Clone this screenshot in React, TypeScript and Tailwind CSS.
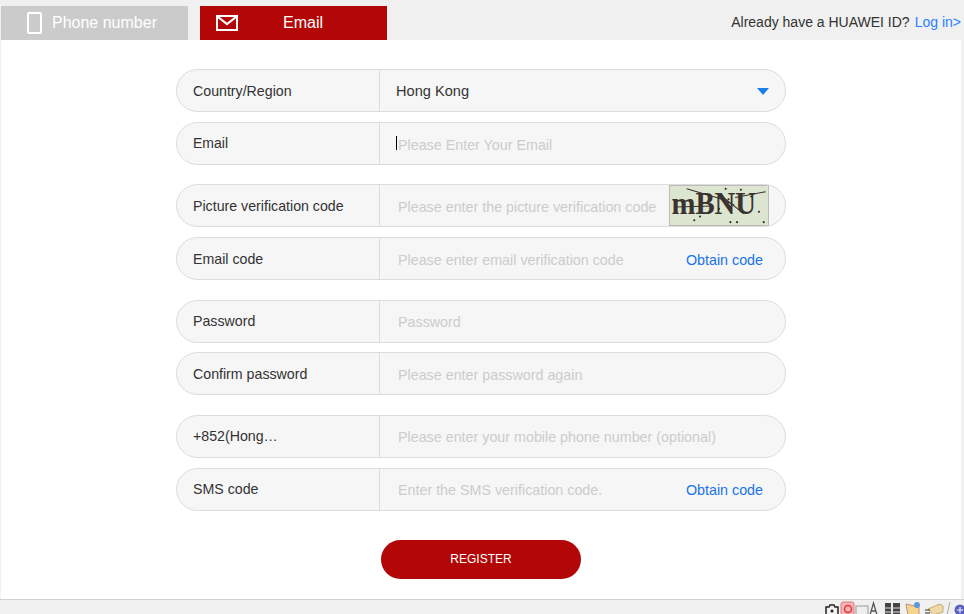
import { useState } from "react";

const FONT = "font-['Liberation_Sans',Arial,sans-serif]";

type Row = {
  label: string;
  placeholder?: string;
  margin: string;
  action?: "code" | "captcha";
  raised?: boolean;
  caret?: boolean;
};

const rows: Row[] = [
  { label: "Email", placeholder: "Please Enter Your Email", margin: "mt-[10px]", caret: true },
  { label: "Picture verification code", placeholder: "Please enter the picture verification code", margin: "mt-[19px]", action: "captcha" },
  { label: "Email code", placeholder: "Please enter email verification code", margin: "mt-[10px]", action: "code" },
  { label: "Password", placeholder: "Password", margin: "mt-[20px]", raised: true },
  { label: "Confirm password", placeholder: "Please enter password again", margin: "mt-[9px]" },
  { label: "+852(Hong…", placeholder: "Please enter your mobile phone number (optional)", margin: "mt-[20px]", raised: true },
  { label: "SMS code", placeholder: "Enter the SMS verification code.", margin: "mt-[10px]", action: "code", raised: true },
];

function Captcha() {
  const dots = [
    [24, 36], [30, 32], [57, 3], [73, 4], [62, 38], [69, 38], [97, 38], [60, 14], [84, 11], [92, 27], [50, 24],
  ];
  return (
    <svg width="100" height="41" viewBox="0 0 100 41" className="shrink-0 border border-[#bbb] bg-[#dbe5cf]">
      <text x="0" y="29" fontFamily="Liberation Serif, serif" fontWeight="700" fontSize="33" fill="#3a3330" textLength="89" lengthAdjust="spacingAndGlyphs">
        mBNU
      </text>
      <path d="M16 3 L50 13 L66 20 M4 22 L44 21 M67 12 L99 6 M52 10 L76 29" stroke="#3a3330" strokeWidth="1.1" fill="none" />
      {dots.map(([x, y]) => (
        <circle key={`${x}-${y}`} cx={x} cy={y} r="1.1" fill="#2f2a26" />
      ))}
    </svg>
  );
}

function FieldRow({ row }: { row: Row }) {
  return (
    <div className={`flex h-[43px] w-[610px] overflow-hidden rounded-[22px] border border-[#dcdcdc] bg-[#f6f6f6] ${row.margin}`}>
      <div className={`flex w-[203px] shrink-0 items-center border-r border-[#dcdcdc] pl-4 text-[#333] ${row.caret ? "text-[14px]" : "text-[14.2px]"} ${row.raised || row.caret ? "" : "pt-0.5"}`}>
        {row.label}
      </div>
      <div className="relative flex min-w-0 flex-1 items-center">
        {row.caret && <span className="absolute left-4 top-[13px] h-[14px] w-px bg-black" />}
        <input
          placeholder={row.placeholder}
          className={`h-full min-w-0 flex-1 bg-transparent pl-[18px] text-[14.3px] outline-none placeholder:text-[#ccc] ${row.raised ? "" : "pt-0.5"} ${FONT}`}
        />
        {row.action === "code" && (
          <button className={`mr-[22px] shrink-0 text-[14.3px] text-[#1a73e8] ${row.raised ? "pt-0.5" : "pt-1"}`}>Obtain code</button>
        )}
        {row.action === "captcha" && (
          <div className="mr-4 flex">
            <Captcha />
          </div>
        )}
      </div>
    </div>
  );
}

function TrayIcons() {
  return (
    <svg width="140" height="15" viewBox="0 0 140 15" className="shrink-0">
      <path d="M2 7h3l1-2h4l1 2h3v8H2z" fill="none" stroke="#222" strokeWidth="1.5" />
      <circle cx="8" cy="11" r="1.5" fill="#222" />
      <rect x="17" y="2" width="13" height="13" rx="2" fill="#f3b6b6" stroke="#e87878" />
      <circle cx="24" cy="9" r="3.5" fill="none" stroke="#e33" strokeWidth="1.5" />
      <rect x="32" y="6" width="12" height="9" fill="#eee" stroke="#999" />
      <path d="M46 15l3.500-12L53 15M47.500 11h4" fill="none" stroke="#555" strokeWidth="1.3" />
      <path d="M61 3h6v12h-6zM69 3h7v12h-7z" fill="#444" />
      <path d="M60 8h17M60 12h17" stroke="#ddd" />
      <path d="M82 4l13 3v8H84z" fill="#f5d58a" stroke="#c88" />
      <circle cx="93" cy="5" r="3" fill="#5b9bd5" />
      <path d="M104 9l12-5 3 2v6l-10 3z" fill="#eed9a8" stroke="#c9a86a" />
      <path d="M101 10h5M101 13h5" stroke="#333" />
      <path d="M123 15l3-13" stroke="#aaa" />
      <circle cx="136" cy="10" r="5.500" fill="#5a5fc0" />
      <path d="M133 10h6M136 7v6" stroke="#fff" />
    </svg>
  );
}

export default function App() {
  const [tab, setTab] = useState<"phone" | "email">("email");
  return (
    <div className={`flex h-[614px] w-[964px] flex-col overflow-hidden bg-[#f0f0f0] ${FONT}`} data-tab={tab}>
      <div className="flex h-10 shrink-0 items-end pl-px">
        <button
          onClick={() => setTab("phone")}
          className="flex h-[34px] w-[187px] items-center bg-[#cbcbcb] pl-[26px] text-base text-white"
        >
          <svg width="16" height="22" viewBox="0 0 16 22" fill="none">
            <rect x="1" y="1" width="13" height="20" rx="1" stroke="#fff" strokeWidth="2" />
          </svg>
          <span className="ml-[9px]">Phone number</span>
        </button>
        <button
          onClick={() => setTab("email")}
          className="ml-3 flex h-[34px] w-[187px] items-center bg-[#b30707] pl-4 text-base text-white"
        >
          <svg width="22" height="16" viewBox="0 0 22 16" fill="none">
            <rect x="1" y="1" width="20" height="14" stroke="#fff" strokeWidth="2" />
            <path d="M2 2l9 7 9-7" stroke="#fff" strokeWidth="2.200" />
          </svg>
          <span className="ml-[45px]">Email</span>
        </button>
        <div className="ml-auto flex h-full items-center pr-[3px] pt-[4px] text-sm text-[#333]">
          Already have a HUAWEI ID?
          <a className="ml-[5px] text-[#2a7fff]">Log in&gt;</a>
        </div>
      </div>

      <div className="ml-px flex h-[559px] w-[960px] shrink-0 flex-col items-center bg-white pt-[29px]">
        <div className="flex h-[43px] w-[610px] overflow-hidden rounded-[22px] border border-[#dcdcdc] bg-[#f6f6f6]">
          <div className="flex w-[203px] shrink-0 items-center border-r border-[#dcdcdc] pl-4 pt-0.5 text-[14.2px] text-[#333]">
            Country/Region
          </div>
          <div className="flex flex-1 items-center justify-between pl-4 pr-[16px] pt-0.5 text-[14.6px] text-[#333]">
            Hong Kong
            <span className="h-0 w-0 border-x-[6px] border-t-[7px] border-x-transparent border-t-[#1a7fe8]" />
          </div>
        </div>
        {rows.map((row) => (
          <FieldRow key={row.label} row={row} />
        ))}
        <button className="mt-[29px] h-[39px] w-[200px] rounded-[20px] bg-[#b30707] pb-0.5 text-xs text-white">
          REGISTER
        </button>
      </div>

      <div className="flex flex-1 items-end justify-end border-t border-[#d0d0d0]">
        <TrayIcons />
      </div>
    </div>
  );
}
